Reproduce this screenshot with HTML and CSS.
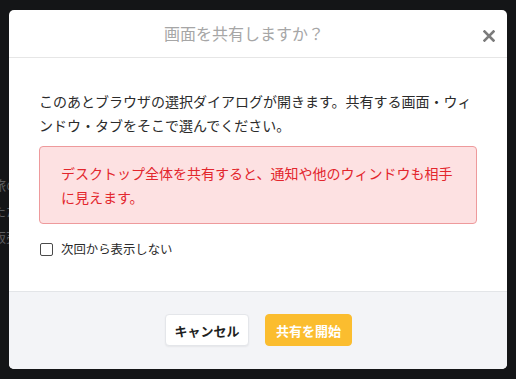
FILE: index.html
```html
<!DOCTYPE html>
<html lang="ja">
<head>
<meta charset="utf-8">
<title>画面を共有しますか？</title>
<link rel="stylesheet" href="styles.css">
</head>
<body>
<div class="stage">
  <div class="backdrop">
    <div class="bg-line">旅の</div>
    <div class="bg-line">たた</div>
    <div class="bg-line">販売</div>
  </div>
  <div class="modal">
    <div class="modal-header">
      <h2 class="modal-title">画面を共有しますか？</h2>
      <button class="close-btn" aria-label="閉じる">
        <svg width="12" height="12" viewBox="0 0 12 12"><path d="M1.5 1.5 L10.5 10.5 M10.5 1.5 L1.5 10.5" stroke="#7b7b7b" stroke-width="2.6" stroke-linecap="square"/></svg>
      </button>
    </div>
    <div class="modal-body">
      <p class="lead">このあとブラウザの選択ダイアログが開きます。共有する画面・ウィンドウ・タブをそこで選んでください。</p>
      <div class="alert">デスクトップ全体を共有すると、通知や他のウィンドウも相手に見えます。</div>
      <label class="check-row"><input type="checkbox" class="check"><span>次回から表示しない</span></label>
    </div>
    <div class="modal-footer">
      <button class="btn btn-cancel">キャンセル</button>
      <button class="btn btn-start">共有を開始</button>
    </div>
  </div>
</div>
</body>
</html>
```
FILE: styles.css
```css
* { box-sizing: border-box; }
html, body { margin: 0; padding: 0; }
body {
  background: #141517;
  font-family: "Noto Sans CJK JP", "Noto Sans", sans-serif;
  width: 516px;
  height: 379px;
  overflow: hidden;
}
.stage {
  display: grid;
  width: 516px;
  height: 379px;
}
.backdrop, .modal { grid-area: 1 / 1; }
.backdrop {
  padding-top: 172px;
  margin-left: -7px;
  color: #5d5e60;
  font-size: 13px;
  line-height: 26px;
}
.bg-line { white-space: nowrap; }
.modal {
  margin: 10px 9px;
  width: 498px;
  height: 359px;
  background: #fff;
  border-radius: 5px;
  display: flex;
  flex-direction: column;
}
.modal-header {
  height: 48px;
  border-bottom: 1px solid #e6e6e6;
  display: flex;
  align-items: flex-start;
}
.modal-title {
  flex: 1;
  margin: 0;
  font-size: 16px;
  font-weight: 400;
  color: #a6a6a6;
  line-height: 46px;
  text-align: center;
}
.close-btn {
  width: 28px;
  height: 12px;
  margin-top: 20px;
  padding: 0 0 0 4px;
  border: 0;
  background: none;
  display: flex;
  align-items: center;
  justify-content: flex-start;
}
.modal-body {
  flex: 1;
  padding: 31px 30px 0;
}
.lead {
  margin: 0 0 9px;
  font-size: 14px;
  line-height: 24px;
  color: #2b2b2b;
}
.alert {
  background: #fde1e2;
  border: 1px solid #ee9a9c;
  border-radius: 4px;
  padding: 14px 21px;
  color: #e3262d;
  font-size: 14px;
  line-height: 24px;
}
.check-row {
  margin-top: 16px;
  display: flex;
  align-items: center;
  gap: 8px;
  font-size: 12.4px;
  line-height: 18px;
  color: #2b2b2b;
}
.check {
  appearance: none;
  -webkit-appearance: none;
  width: 13px;
  height: 13px;
  margin: 0 0 0 1px;
  border: 1px solid #4a4a4a;
  border-radius: 2px;
  background: #fff;
}
.modal-footer {
  height: 78px;
  border-top: 1px solid #e3e5e8;
  background: #f3f4f7;
  border-radius: 0 0 5px 5px;
  display: flex;
  justify-content: center;
  align-items: flex-start;
  gap: 16px;
  padding-top: 22px;
  padding-left: 1px;
}
.btn {
  height: 32px;
  font-family: inherit;
  font-size: 13px;
  font-weight: 700;
  border-radius: 4px;
  cursor: pointer;
}
.btn-cancel {
  width: 84px;
  background: #fff;
  border: 1px solid #e4e6ea;
  color: #1f1f1f;
  box-shadow: 0 1px 2px rgba(0,0,0,0.06);
}
.btn-start {
  width: 87px;
  background: #fbbd2f;
  border: 1px solid #fbbd2f;
  color: #fff;
}
```
